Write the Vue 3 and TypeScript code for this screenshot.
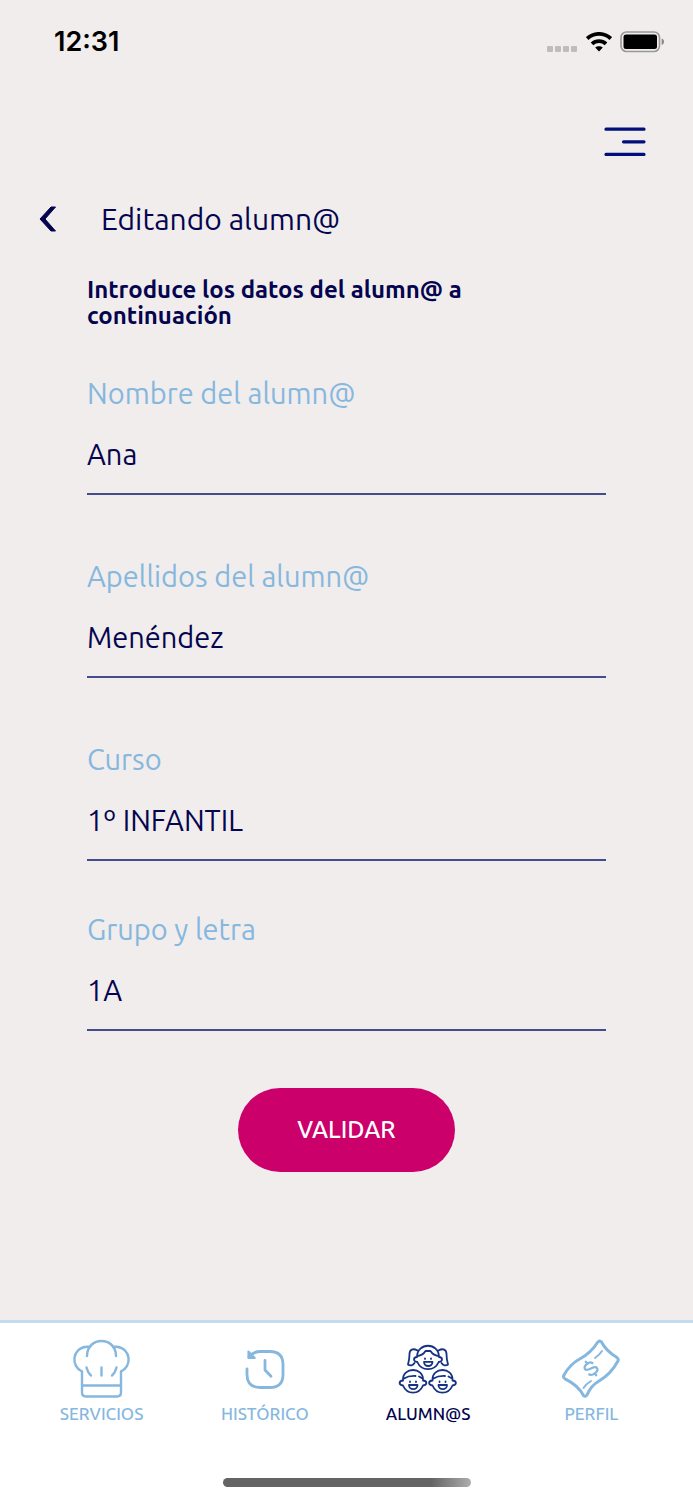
<script setup lang="ts">
import { reactive, ref } from 'vue'

interface Field {
  key: 'nombre' | 'apellidos' | 'curso' | 'grupo'
  label: string
}

const fields: Field[] = [
  { key: 'nombre', label: 'Nombre del alumn@' },
  { key: 'apellidos', label: 'Apellidos del alumn@' },
  { key: 'curso', label: 'Curso' },
  { key: 'grupo', label: 'Grupo y letra' },
]

const alumno = reactive({
  nombre: 'Ana',
  apellidos: 'Menéndez',
  curso: '1º INFANTIL',
  grupo: '1A',
})

const tabs = [
  { id: 'servicios', label: 'SERVICIOS' },
  { id: 'historico', label: 'HISTÓRICO' },
  { id: 'alumnos', label: 'ALUMN@S' },
  { id: 'perfil', label: 'PERFIL' },
]
const active = ref('alumnos')
</script>

<template>
  <div class="screen">
    <div class="status">
      <span class="time">12:31</span>
      <div class="indicators">
        <div class="signal"><i></i><i></i><i></i><i></i></div>
        <svg class="wifi" width="26" height="20" viewBox="0 0 26 20" fill="none" stroke="#000" stroke-width="3.8">
          <path d="M1.200 6.600C8 .3 18 .3 24.800 6.600" />
          <path d="M6 11.800c4-3.700 10-3.700 14 0" />
          <path d="M13 19.500l-3.800-3.900c2-1.800 5.600-1.800 7.600 0z" fill="#000" stroke="none" />
        </svg>
        <svg class="battery" width="44" height="22" viewBox="0 0 44 22">
          <rect x="1" y="1" width="38.500" height="19.500" rx="5.500" fill="none" stroke="#999797" stroke-width="1.600" />
          <rect x="3.500" y="3.500" width="33.500" height="14.500" rx="2.500" fill="#000" />
          <path d="M41.700 7.500c3 1 3 5.500 0 6.500z" fill="#858383" />
        </svg>
      </div>
    </div>

    <header class="topbar">
      <button class="icon-button" type="button" aria-label="Menú">
        <svg width="42" height="30" viewBox="0 0 42 30" stroke="#020f78" stroke-width="3.200" stroke-linecap="round">
          <path d="M2 2.200h38M19.500 14.800H40M2 27.400h38" />
        </svg>
      </button>
    </header>

    <main>
      <div class="heading">
        <button class="icon-button" type="button" aria-label="Volver">
          <svg width="18" height="26" viewBox="0 0 18 26" fill="#04044f">
            <path d="M12 1h4.500L6 13l10.500 12H12L1 13z" stroke="#04044f" stroke-width="1" stroke-linejoin="round" />
          </svg>
        </button>
        <h1>Editando alumn@</h1>
      </div>

      <form @submit.prevent>
        <p class="intro">Introduce los datos del alumn@ a continuación</p>
        <div v-for="f in fields" :key="f.key" class="field" :class="f.key">
          <label :for="f.key">{{ f.label }}</label>
          <input :id="f.key" v-model="alumno[f.key]" type="text" />
        </div>
        <button class="submit" type="submit">VALIDAR</button>
      </form>
    </main>

    <footer>
      <nav>
        <button
          v-for="t in tabs"
          :key="t.id"
          type="button"
          class="tab"
          :class="{ active: active === t.id }"
          @click="active = t.id"
        >
          <svg v-if="t.id === 'servicios'" width="60" height="60" viewBox="1 1 60 60" fill="none" stroke="currentColor" stroke-width="2.400" stroke-linecap="round" stroke-linejoin="round">
            <path d="M11 33.500v21q0 4 4 4h31q4 0 4-4v-21M11 47.500h39" />
            <path d="M11 33.500C0 28.500.5 11 15 8.800q1.500-.3 4 .2M50 33.500C61 28.500 60.500 11 46 8.800q-1.500-.3-4 .2" />
            <path d="M16 18c0-20 29-20 29 0M15.500 29.500q1.500 5.500 4.500 8M30.500 29.500v8M45.500 29.500q-1.500 5.500-4.500 8" />
          </svg>
          <svg v-else-if="t.id === 'historico'" width="60" height="60" viewBox="0 1 60 60" fill="none" stroke="currentColor" stroke-width="2.800" stroke-linecap="round" stroke-linejoin="round">
            <path d="M12 31v5.500q0 13 13 13h10q13 0 13-13v-10q0-13-13-13H25Q18.500 13.500 14 19" />
            <path d="M13.400 13.500v6.400h6.400z" fill="currentColor" stroke-width="2" />
            <path d="M30 22.500v9.500l6 6.200" />
          </svg>
          <svg v-else-if="t.id === 'alumnos'" width="60" height="60" viewBox="0 0 60 60" fill="none" stroke="#153283" stroke-width="1.800" stroke-linecap="round" stroke-linejoin="round">
            <path d="M19 18C19 3 41 3 41 18M19 18c-4 .3-4 4.500.3 5 4.200 9.500 17.200 9.500 21.400 0 4.300-.5 4.300-4.700.3-5M19.500 17c3.500-.5 6.500-2.500 8-5h5c1.500 2.500 4.500 4.500 8 5" />
            <path d="M19.500 11.500C15 9 11.500 10.500 11.500 15c0 4-.5 7-1.500 10.500 2 1.500 5 1.200 6.500-1.500M40.500 11.500C45 9 48.500 10.500 48.500 15c0 4 .5 7 1.500 10.500-2 1.500-5 1.200-6.500-1.500" />
            <path d="M27 19.300v.6M33 19.300v.6M26 22.800h8.500c0 5.600-8.500 5.600-8.500 0z" />
            <path d="M5 41.500C4 27.500 26 27.500 25 41.500c4.500.3 4.500 4.500 0 5-4 9.500-16 9.500-20 0-4.500-.5-4.500-4.700 0-5zM6 39.500c3.500-2.200 7.500-2.700 11.500-2.500M21 37.500l3.500 2" />
            <path d="M12 42.500v.6M18 42.500v.6M11 46h8.500c0 5.600-8.500 5.600-8.500 0z" />
            <path d="M34.500 41.500C33.500 27.500 55.500 27.500 54.500 41.500c4.500.3 4.500 4.500 0 5-4 9.500-16 9.500-20 0-4.500-.5-4.500-4.700 0-5zM35.500 39.500c3.500-2.200 7.500-2.700 11.500-2.500M50.500 37.500l3.500 2" />
            <path d="M41.500 42.500v.6M47.500 42.500v.6M40.500 46H49c0 5.600-8.500 5.600-8.500 0z" />
          </svg>
          <svg v-else width="60" height="60" viewBox="0 0 60 60" fill="none" stroke="currentColor" stroke-width="3" stroke-linecap="round" stroke-linejoin="round">
            <path d="M37 2.800Q39 1.200 40.500 3q4.500 9 15.500 15.500 2.200 2 .5 4.300C51 33 44 38.500 38 42q-8 4.500-12 14-1.500 2.200-3.500.5Q17 46 4 39.800 1.700 38.500 3 36 9 25 19.500 19.500 30 14 37 2.800z" />
            <path d="M41 12q-2.500 4-7 7M30 42q-5 3-7.500 7" stroke-width="1.900" />
            <path transform="translate(30 29.500) rotate(-38)" d="M4.500-3.500C3.500-7-5-7-5-3 -5 1 5-1 5 3.200 5 7.200-4 7-5 3.500M0-8.500V-6M0 6v2.500" stroke-width="2.300" />
          </svg>
          <span>{{ t.label }}</span>
        </button>
      </nav>
      <div class="home-bar"></div>
    </footer>
  </div>
</template>

<style>
body {
  margin: 0;
  background: #f0edec;
}
</style>

<style scoped>
.screen {
  min-height: 100vh;
  display: flex;
  flex-direction: column;
  background: #f0edec;
  color: #04044f;
  font-family: Ubuntu, "Noto Sans", sans-serif;
}
button,
input {
  font: inherit;
  color: inherit;
  border: 0;
  padding: 0;
  background: none;
  border-radius: 0;
}
button {
  cursor: pointer;
}
svg {
  display: block;
}
.status {
  height: 84px;
  padding: 0 29px 0 54px;
  box-sizing: border-box;
  display: flex;
  align-items: center;
  justify-content: space-between;
}
.time {
  font: 600 27px/32px Inter, sans-serif;
  color: #000;
}
.indicators {
  display: flex;
  align-items: center;
  gap: 8px;
}
.signal {
  display: flex;
  gap: 2px;
  padding: 13px 1px 0 0;
}
.signal i {
  width: 6px;
  height: 6px;
  border-radius: 1px;
  background: #bfbdbc;
}
.topbar {
  display: flex;
  justify-content: flex-end;
  padding: 43px 47px 0;
}
.heading {
  display: flex;
  align-items: center;
  gap: 44px;
  padding: 42px 39px 0;
}
h1 {
  margin: 0;
  font-size: 30px;
  line-height: 40px;
  font-weight: 400;
}
form {
  display: flex;
  flex-direction: column;
  padding: 38px 87px 48px;
}
.intro {
  margin: 0 0 47px;
  max-width: 420px;
  font-size: 24px;
  line-height: 26px;
  font-weight: 700;
}
.field {
  display: flex;
  flex-direction: column;
  margin-bottom: 64px;
}
.field.curso {
  margin-bottom: 51px;
}
.field.grupo {
  margin-bottom: 57px;
}
label {
  font-size: 29px;
  line-height: 34px;
  color: #86b7df;
}
input {
  width: 100%;
  box-sizing: border-box;
  height: 85px;
  padding: 4px 0 0;
  font-size: 29px;
  border-bottom: 2px solid #454c8b;
  outline: none;
}
.submit {
  align-self: center;
  padding: 25px 59px;
  border-radius: 42px;
  background: #cc006b;
  color: #fff;
  font-size: 24px;
  line-height: 34px;
  font-weight: 500;
}
footer {
  margin-top: auto;
  padding-bottom: 13px;
  border-top: 3px solid #c3dbed;
  background: #fff;
}
nav {
  display: grid;
  grid-template-columns: repeat(4, 1fr);
  padding: 16px 20px 0;
}
.tab {
  display: flex;
  flex-direction: column;
  align-items: center;
  gap: 4px;
  color: #86b7df;
  font-size: 17px;
  line-height: 22px;
  font-weight: 500;
}
.tab.active {
  color: #04044f;
}
.home-bar {
  width: 248px;
  height: 9px;
  margin: 53px auto 0;
  border-radius: 5px;
  background: linear-gradient(90deg, #646464 84%, #adadad);
}
</style>
